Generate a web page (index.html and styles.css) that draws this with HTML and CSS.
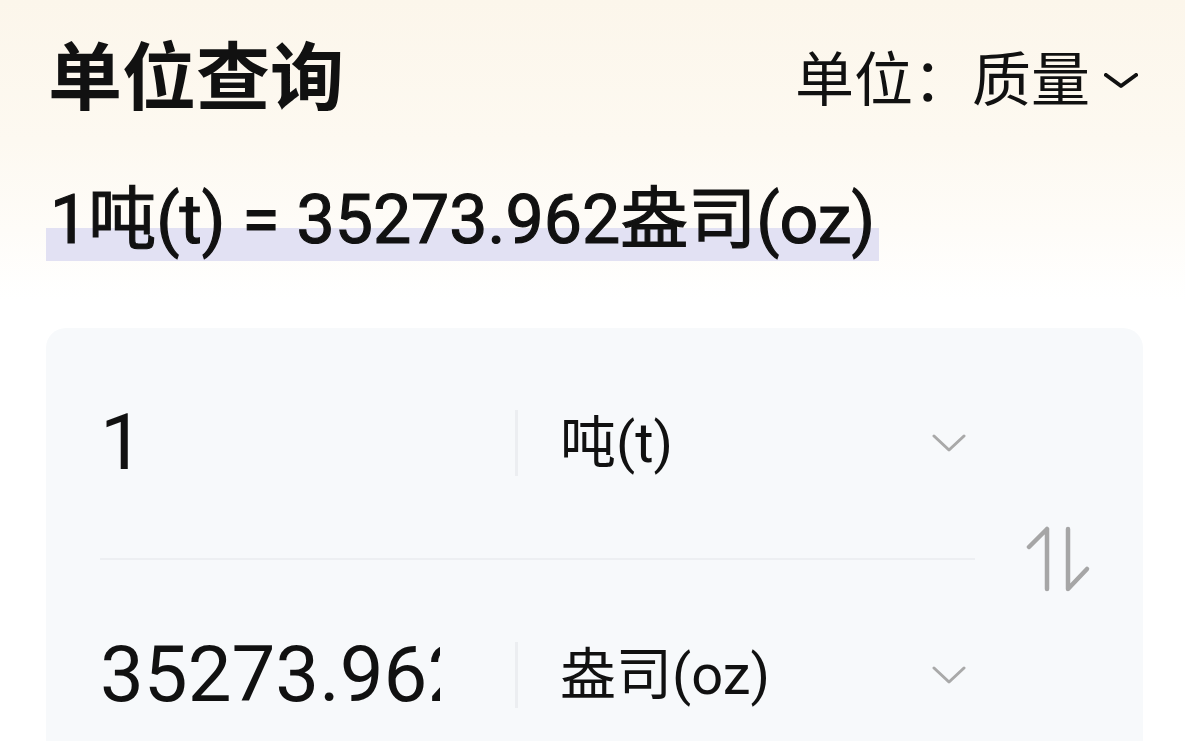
FILE: index.html
```html
<!DOCTYPE html>
<html lang="zh-CN">
<head>
<meta charset="utf-8">
<title>单位查询</title>
<link rel="stylesheet" href="styles.css">
</head>
<body>
<div class="page">
  <header class="header">
    <h1 class="title">单位查询</h1>
    <div class="category">
      <span class="category-text">单位：质量</span>
      <svg class="category-chevron" viewBox="0 0 34 16" width="34" height="16" aria-hidden="true">
        <path d="M2 2 L17 13 L32 2" fill="none" stroke="#111" stroke-width="4" stroke-linecap="round" stroke-linejoin="round"/>
      </svg>
    </div>
  </header>

  <div class="result"><span class="result-text">1吨(t) = 35273.962盎司(oz)</span></div>

  <section class="card">
    <div class="rows">
      <div class="row">
        <div class="value">1</div>
        <div class="vline"></div>
        <div class="unit">吨(t)</div>
        <svg class="chevron" viewBox="0 0 34 18" width="34" height="18" aria-hidden="true">
          <path d="M2 2 L17 16 L32 2" fill="none" stroke="#a9a9a9" stroke-width="3" stroke-linecap="round" stroke-linejoin="round"/>
        </svg>
      </div>
      <div class="hline"></div>
      <div class="row">
        <div class="value">35273.962</div>
        <div class="vline"></div>
        <div class="unit">盎司(oz)</div>
        <svg class="chevron" viewBox="0 0 34 18" width="34" height="18" aria-hidden="true">
          <path d="M2 2 L17 16 L32 2" fill="none" stroke="#a9a9a9" stroke-width="3" stroke-linecap="round" stroke-linejoin="round"/>
        </svg>
      </div>
    </div>
    <div class="swap">
      <svg viewBox="0 0 66 66" width="66" height="66" aria-hidden="true">
        <path d="M21 3 L21 63 M21 3 L3 21" fill="none" stroke="#a6a6a6" stroke-width="4.5" stroke-linecap="round" stroke-linejoin="round"/>
        <path d="M42 3 L42 63 L61 43" fill="none" stroke="#a6a6a6" stroke-width="4.5" stroke-linecap="round" stroke-linejoin="round"/>
      </svg>
    </div>
  </section>
</div>
</body>
</html>
```

FILE: styles.css
```css
* {
  box-sizing: border-box;
}

html, body {
  margin: 0;
  padding: 0;
  height: 100%;
  overflow: hidden;
}

body {
  font-family: Roboto, "Noto Sans CJK SC", sans-serif;
  color: #111;
  background: linear-gradient(180deg, #fcf6eb 0px, #fdf9f1 140px, #fefcf8 230px, #ffffff 300px);
}

.page {
  padding: 0 42px 0 46px;
}

.header {
  display: flex;
  align-items: center;
  justify-content: space-between;
  padding-top: 40px;
  padding-right: 5px;
  height: 118px;
}

.title {
  margin: 0 0 0 2px;
  font-size: 74px;
  line-height: 76px;
  font-weight: 700;
  letter-spacing: 0;
}

.category {
  display: flex;
  align-items: center;
  gap: 14px;
  margin-top: 4px;
}

.category-text {
  font-size: 59px;
  line-height: 62px;
  font-weight: 400;
}

.category-chevron {
  display: block;
}

.result {
  margin-top: 67px;
  height: 80px;
}

.result-text {
  display: inline-block;
  font-size: 68px;
  line-height: 70px;
  font-weight: 400;
  -webkit-text-stroke: 1.2px #111;
  padding: 0 4px 6px 4px;
  background: linear-gradient(180deg, transparent 0, transparent 57%, #e2e1f3 57%, #e2e1f3 100%);
}

.card {
  margin-top: 63px;
  background: #f7f9fb;
  border-radius: 20px;
  display: flex;
  height: 480px;
}

.rows {
  flex: 1;
  padding-left: 54px;
}

.row {
  height: 230px;
  display: flex;
  align-items: center;
}

.hline {
  height: 2px;
  background: #edeff2;
}

.value {
  width: 340px;
  overflow: hidden;
  white-space: nowrap;
  font-size: 78px;
  line-height: 90px;
  font-weight: 400;
}

.vline {
  width: 3px;
  height: 66px;
  margin-left: 75px;
  background: #eceef1;
}

.unit {
  flex: 1;
  margin-left: 42px;
  font-size: 56px;
  line-height: 60px;
}

.chevron {
  display: block;
  margin-right: 9px;
}

.swap {
  width: 168px;
  display: flex;
  align-items: center;
  justify-content: center;
  height: 462px;
}

.swap svg {
  display: block;
}
```
